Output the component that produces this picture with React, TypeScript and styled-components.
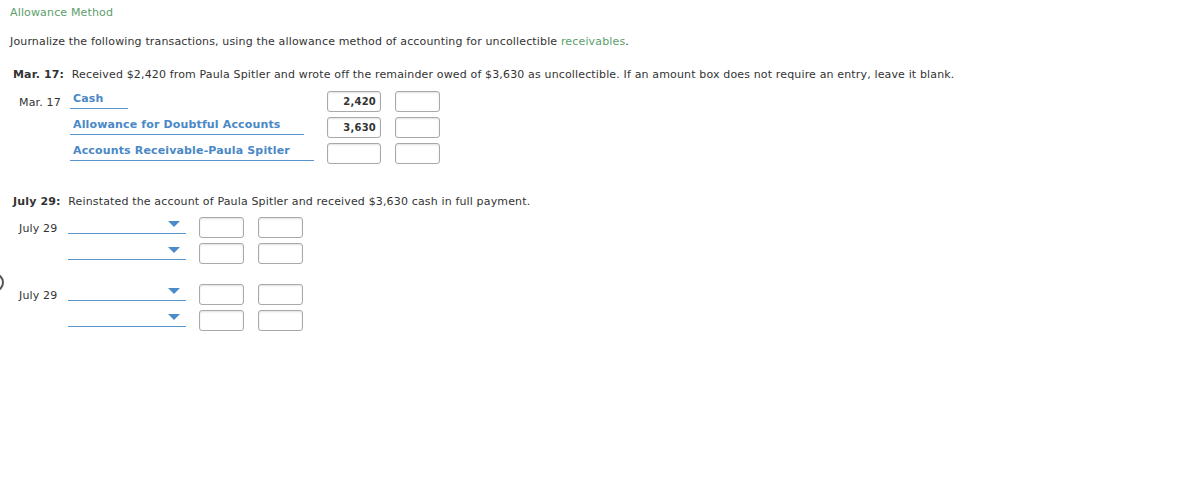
import React from "react";
import styled, { createGlobalStyle } from "styled-components";

const GlobalStyle = createGlobalStyle`
  html, body {
    margin: 0;
    padding: 0;
    background: #fff;
  }
  body {
    font-family: "DejaVu Sans", Verdana, sans-serif;
    font-size: 11px;
    letter-spacing: 0.15px;
    color: #333;
  }
`;

const Page = styled.div`
  position: relative;
  width: 1178px;
  height: 501px;
  padding: 6px 0 0 10px;
  box-sizing: border-box;
`;

const Title = styled.div`
  color: #5b9e6b;
  line-height: 14px;
`;

const Intro = styled.p`
  margin: 15px 0 0;
  line-height: 14px;
`;

const Green = styled.span`
  color: #5b9e6b;
`;

const Question = styled.p<{ $top: number }>`
  margin: ${(p) => p.$top}px 0 0 3px;
  line-height: 14px;
`;

const Bold = styled.b`
  font-weight: bold;
  margin-right: 4px;
`;

const Journal = styled.div<{ $top: number }>`
  margin-top: ${(p) => p.$top}px;
  display: flex;
  flex-direction: column;
`;

const Row = styled.div<{ $gap?: number }>`
  display: flex;
  align-items: flex-start;
  height: 26px;
  margin-top: ${(p) => p.$gap || 0}px;
`;

const DateCell = styled.div<{ $w: number }>`
  width: ${(p) => p.$w}px;
  padding: 5px 0 0 9px;
  box-sizing: border-box;
  line-height: 14px;
  flex-shrink: 0;
`;

const AccountCell = styled.div<{ $w: number }>`
  width: ${(p) => p.$w}px;
  flex-shrink: 0;
`;

const AccountName = styled.div<{ $w: number }>`
  width: ${(p) => p.$w}px;
  height: 16px;
  border-bottom: 1px solid #5b95cc;
  color: #4a88c6;
  font-weight: bold;
  line-height: 14px;
  padding: 1px 0 0 3px;
  box-sizing: content-box;
`;

const SelectField = styled.div<{ $w: number }>`
  position: relative;
  width: ${(p) => p.$w}px;
  height: 16px;
  border-bottom: 1px solid #5b95cc;
`;

const Arrow = styled.span`
  position: absolute;
  right: 6px;
  top: 4px;
  width: 0;
  height: 0;
  border-left: 6px solid transparent;
  border-right: 6px solid transparent;
  border-top: 6px solid #4a8cc9;
`;

const AmountBox = styled.div<{ $w: number; $ml: number }>`
  width: ${(p) => p.$w}px;
  height: 21px;
  margin-left: ${(p) => p.$ml}px;
  box-sizing: border-box;
  border: 1px solid #a9a9a9;
  border-radius: 3px;
  box-shadow: inset 0 1px 2px rgba(0, 0, 0, 0.12);
  font-size: 10px;
  font-weight: bold;
  letter-spacing: 0.2px;
  text-align: right;
  padding: 4px 4px 0 0;
  line-height: 12px;
  color: #333;
  flex-shrink: 0;
`;

const EdgeRing = styled.div`
  position: absolute;
  left: -15px;
  top: 273px;
  width: 19px;
  height: 19px;
  box-sizing: border-box;
  border: 2px solid #555;
  border-radius: 50%;
`;

const marRows = [
  { name: "Cash", w: 55, debit: "2,420" },
  { name: "Allowance for Doubtful Accounts", w: 231, debit: "3,630" },
  { name: "Accounts Receivable-Paula Spitler", w: 241, debit: "" },
];

const julyBlocks = [0, 15];

const App = () => {
  return (
    <Page>
      <GlobalStyle />
      <Title>Allowance Method</Title>
      <Intro>
        Journalize the following transactions, using the allowance method of accounting for uncollectible{" "}
        <Green>receivables</Green>.
      </Intro>

      <Question $top={19}>
        <Bold>Mar. 17:</Bold> Received $2,420 from Paula Spitler and wrote off the remainder owed of $3,630 as
        uncollectible. If an amount box does not require an entry, leave it blank.
      </Question>

      <Journal $top={9}>
        {marRows.map((r, i) => (
          <Row key={i}>
            <DateCell $w={60}>{i === 0 ? "Mar. 17" : ""}</DateCell>
            <AccountCell $w={257}>
              <AccountName $w={r.w}>{r.name}</AccountName>
            </AccountCell>
            <AmountBox $w={54} $ml={0}>{r.debit}</AmountBox>
            <AmountBox $w={45} $ml={14}></AmountBox>
          </Row>
        ))}
      </Journal>

      <Question $top={26}>
        <Bold>July 29:</Bold> Reinstated the account of Paula Spitler and received $3,630 cash in full payment.
      </Question>

      <Journal $top={8}>
        {julyBlocks.map((gap, b) =>
          [0, 1].map((i) => (
            <Row key={`${b}-${i}`} $gap={i === 0 ? gap : 0}>
              <DateCell $w={58}>{i === 0 ? "July 29" : ""}</DateCell>
              <AccountCell $w={131}>
                <SelectField $w={118}>
                  <Arrow />
                </SelectField>
              </AccountCell>
              <AmountBox $w={45} $ml={0}></AmountBox>
              <AmountBox $w={45} $ml={14}></AmountBox>
            </Row>
          ))
        )}
      </Journal>

      <EdgeRing />
    </Page>
  );
};

export default App;
